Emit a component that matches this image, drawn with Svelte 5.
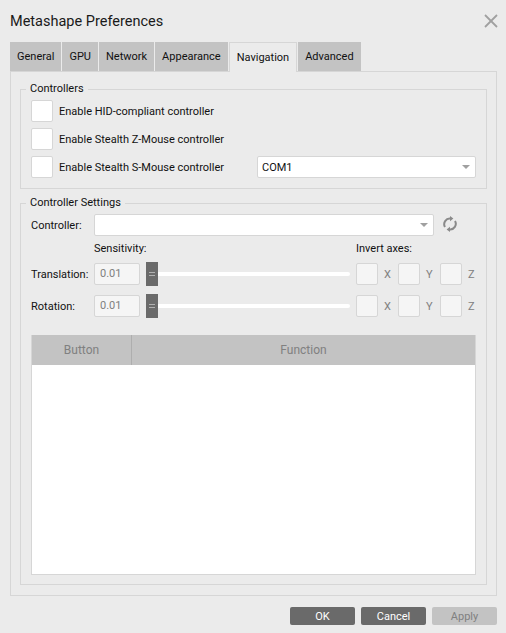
<script lang="ts">
  const tabs = ['General', 'GPU', 'Network', 'Appearance', 'Navigation', 'Advanced'];
  const active = 'Navigation';
  const controllers = ['Enable HID-compliant controller', 'Enable Stealth Z-Mouse controller'];
  const axes = ['X', 'Y', 'Z'];
  const rows = ['Translation:', 'Rotation:'];
</script>

<div class="dialog">
  <header class="titlebar">
    <span class="title">Metashape Preferences</span>
    <svg class="close" width="16" height="16" viewBox="0 0 16 16" fill="none" stroke="#a0a0a0" stroke-width="1.8">
      <line x1="2" y1="2" x2="14" y2="14"></line>
      <line x1="14" y1="2" x2="2" y2="14"></line>
    </svg>
  </header>

  <nav class="tabs">
    {#each tabs as tab}
      <div class="tab" class:active={tab === active}>{tab}</div>
    {/each}
  </nav>

  <div class="pane">
    <fieldset class="group">
      <legend>Controllers</legend>
      <div class="controllers">
        {#each controllers as label}
          <div class="check-row">
            <span class="check"></span>
            <span>{label}</span>
          </div>
        {/each}
        <div class="check-row">
          <span class="check"></span>
          <span class="grow">Enable Stealth S-Mouse controller</span>
          <div class="combo com">
            <span>COM1</span>
            <span class="arrow"></span>
          </div>
        </div>
      </div>
    </fieldset>

    <fieldset class="group settings">
      <legend>Controller Settings</legend>
      <div class="controller-row">
        <span class="label">Controller:</span>
        <div class="combo wide"><span></span><span class="arrow"></span></div>
        <svg class="refresh" width="14" height="16" viewBox="0 0 14 16" fill="none" stroke="#8a8a8a" stroke-width="2">
          <path d="M2 11 A5.6 5.6 0 0 1 7.5 2.6"></path>
          <path d="M12 5 A5.6 5.6 0 0 1 6.5 13.4"></path>
          <path d="M7 0 L10.4 2.6 L7 5.2 Z" fill="#8a8a8a" stroke="none"></path>
          <path d="M7 10.8 L3.6 13.4 L7 16 Z" fill="#8a8a8a" stroke="none"></path>
        </svg>
      </div>
      <div class="headings">
        <span class="sens">Sensitivity:</span>
        <span>Invert axes:</span>
      </div>
      {#each rows as row}
        <div class="axis-row">
          <span class="label">{row}</span>
          <div class="spin">0.01</div>
          <div class="slider">
            <span class="handle"><i></i></span>
            <span class="groove"></span>
          </div>
          <div class="axes">
            {#each axes as axis}
              <span class="check disabled"></span>
              <span class="axis">{axis}</span>
            {/each}
          </div>
        </div>
      {/each}
      <div class="table">
        <div class="thead">
          <div class="th button">Button</div>
          <div class="th">Function</div>
        </div>
        <div class="tbody"></div>
      </div>
    </fieldset>
  </div>

  <footer class="buttons">
    <button>OK</button>
    <button>Cancel</button>
    <button disabled>Apply</button>
  </footer>
</div>

<style>
  :global(body) {
    margin: 0;
    background: #ebebeb;
  }

  .dialog {
    width: 506px;
    height: 633px;
    box-sizing: border-box;
    padding: 0 9px 0 10px;
    display: flex;
    flex-direction: column;
    font-family: Roboto, "Open Sans", sans-serif;
    font-size: 11px;
    color: #111;
    overflow: hidden;
  }

  .titlebar {
    height: 42px;
    flex-shrink: 0;
    display: flex;
    align-items: center;
    justify-content: space-between;
    font-size: 14.5px;
    color: #1a1a1a;
  }

  .close {
    margin-right: -2px;
  }

  .tabs {
    display: flex;
    gap: 1px;
    height: 29px;
    flex-shrink: 0;
  }

  .tab {
    display: flex;
    align-items: center;
    justify-content: center;
    padding: 0 7px;
    background: #c3c3c3;
  }

  .tab.active {
    background: #ebebeb;
    border: 1px solid #d6d6d6;
    border-bottom: none;
    height: 30px;
    box-sizing: border-box;
    position: relative;
    z-index: 1;
  }

  .pane {
    height: 525px;
    box-sizing: border-box;
    border: 1px solid #d6d6d6;
    padding: 9px 9px 0;
    display: flex;
    flex-direction: column;
  }

  .group {
    margin: 0;
    padding: 0 10px;
    border: 1px solid #d6d6d6;
    min-width: 0;
  }

  .group legend {
    padding: 0 4px;
    margin-left: -5px;
    height: 16px;
    line-height: 16px;
  }

  .controllers {
    display: flex;
    flex-direction: column;
    gap: 6px;
    padding: 3px 0 10px;
  }

  .check-row {
    display: flex;
    align-items: center;
    gap: 6px;
    height: 22px;
  }

  .grow {
    flex: 1;
  }

  .check {
    width: 22px;
    height: 22px;
    box-sizing: border-box;
    background: #fff;
    border: 1px solid #d6d6d6;
    border-radius: 2px;
    flex-shrink: 0;
  }

  .check.disabled {
    background: #f5f5f5;
  }

  .combo {
    height: 22px;
    box-sizing: border-box;
    background: #fff;
    border: 1px solid #d6d6d6;
    border-radius: 2px;
    display: flex;
    align-items: center;
    justify-content: space-between;
    padding: 0 4px;
  }

  .com {
    width: 219px;
  }

  .wide {
    width: 340px;
  }

  .arrow {
    width: 0;
    height: 0;
    border-left: 4px solid transparent;
    border-right: 4px solid transparent;
    border-top: 4px solid #a0a0a0;
    margin-right: 1px;
  }

  .settings {
    margin-top: 6px;
    height: 390px;
    box-sizing: border-box;
  }

  .controller-row {
    display: flex;
    align-items: center;
    height: 22px;
    margin-top: 3px;
  }

  .controller-row .label {
    width: 63px;
  }

  .refresh {
    margin-left: 9px;
    margin-top: -3px;
  }

  .headings {
    display: flex;
    height: 16px;
    margin-top: 5px;
    line-height: 16px;
  }

  .sens {
    margin-left: 63px;
    width: 262px;
  }

  .axis-row {
    display: flex;
    align-items: center;
    height: 22px;
    margin-top: 6px;
  }

  .axis-row + .axis-row {
    margin-top: 10px;
  }

  .axis-row .label {
    width: 63px;
  }

  .spin {
    width: 46px;
    height: 22px;
    box-sizing: border-box;
    background: #f5f5f5;
    border: 1px solid #d6d6d6;
    border-radius: 2px;
    color: #808080;
    line-height: 20px;
    padding-left: 5px;
  }

  .slider {
    width: 204px;
    margin-left: 6px;
    display: flex;
    align-items: center;
    height: 24px;
  }

  .handle {
    width: 12px;
    height: 24px;
    background: #6a6a6a;
    display: flex;
    align-items: center;
    justify-content: center;
    flex-shrink: 0;
  }

  .handle i {
    width: 6px;
    height: 2px;
    border-top: 1px solid #b0b0b0;
    border-bottom: 1px solid #b0b0b0;
  }

  .groove {
    flex: 1;
    height: 4px;
    background: #fff;
    border-radius: 0 2px 2px 0;
  }

  .axes {
    margin-left: 6px;
    display: grid;
    grid-template-columns: 22px 20px 22px 20px 22px 14px;
    align-items: center;
  }

  .axis {
    padding-left: 6px;
    color: #808080;
  }

  .table {
    width: 445px;
    height: 240px;
    box-sizing: border-box;
    margin-top: 18px;
    border: 1px solid #d6d6d6;
    border-top: none;
    background: #fff;
    display: flex;
    flex-direction: column;
  }

  .thead {
    height: 30px;
    background: #c3c3c3;
    display: flex;
    color: #808080;
    font-size: 12px;
  }

  .th {
    flex: 1;
    display: flex;
    align-items: center;
    justify-content: center;
  }

  .th.button {
    flex: none;
    width: 100px;
    box-sizing: border-box;
    border-right: 1px solid #aeaeae;
  }

  .tbody {
    flex: 1;
  }

  .buttons {
    display: flex;
    justify-content: flex-end;
    gap: 6px;
    margin-top: 11px;
  }

  button {
    width: 65px;
    height: 18px;
    padding: 0;
    border: none;
    border-radius: 2px;
    background: #6a6a6a;
    color: #fff;
    font: inherit;
  }

  button:disabled {
    background: #c3c3c3;
    color: #808080;
  }
</style>
